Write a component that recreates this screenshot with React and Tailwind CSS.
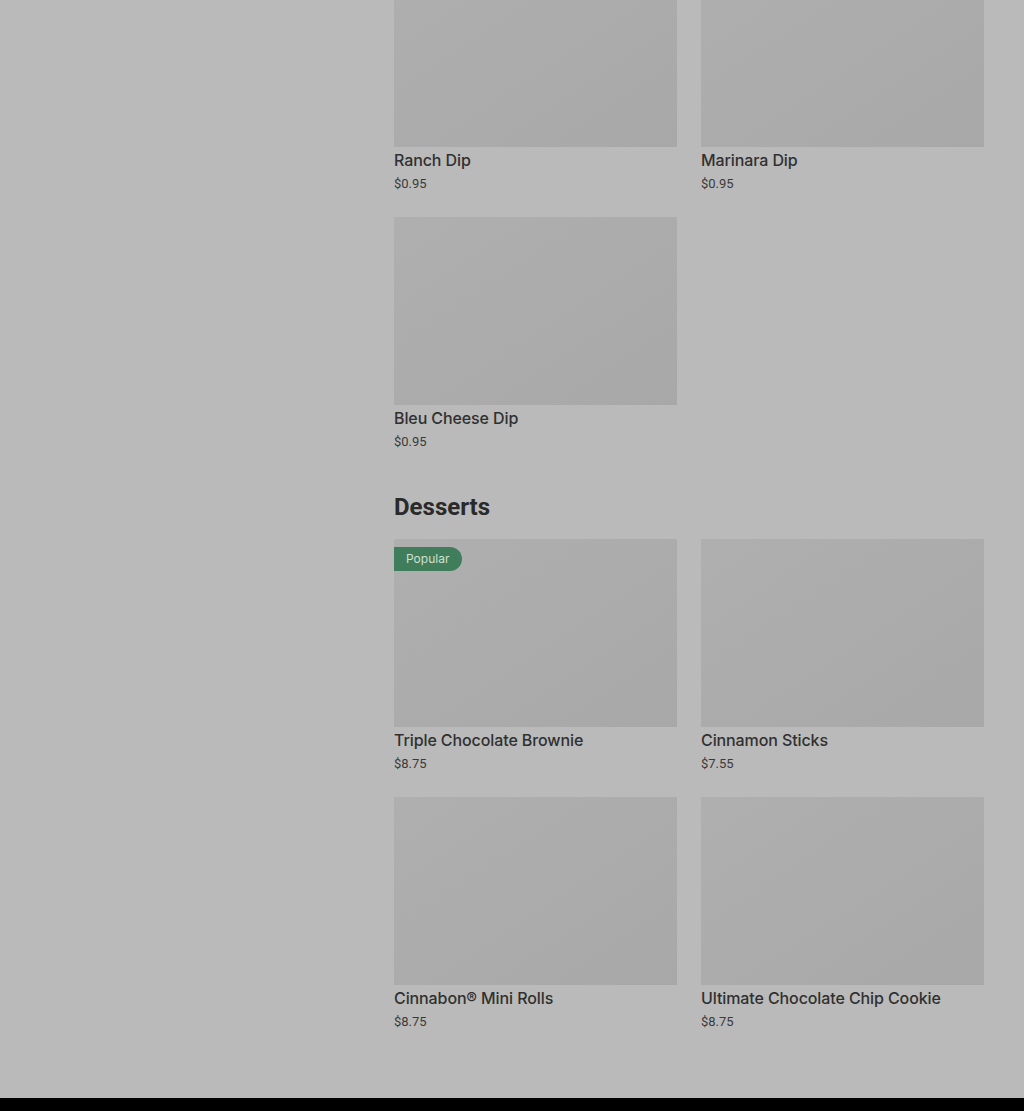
const dips = [
  { name: 'Ranch Dip', price: '$0.95' },
  { name: 'Marinara Dip', price: '$0.95' },
  { name: 'Bleu Cheese Dip', price: '$0.95' },
];

const desserts = [
  { name: 'Triple Chocolate Brownie', price: '$8.75', popular: true },
  { name: 'Cinnamon Sticks', price: '$7.55' },
  { name: 'Cinnabon® Mini Rolls', price: '$8.75' },
  { name: 'Ultimate Chocolate Chip Cookie', price: '$8.75' },
];

const MenuCard = ({ item }) => (
  <div className="flex flex-col">
    <div className="relative h-[188px] bg-gradient-to-br from-[#afafaf] to-[#a8a8a8]">
      {item.popular && (
        <span className="absolute left-0 top-2 h-6 pl-3 pr-[13px] flex items-center rounded-r-full bg-[#3f7d5b] text-[12px] text-[#cfe0d4] font-['Inter',sans-serif]">
          Popular
        </span>
      )}
    </div>
    <h3 className="mt-[3px] text-[16px] leading-5 font-medium tracking-[-0.1px] text-[#303030] font-['Inter',sans-serif]">{item.name}</h3>
    <p className="mt-[5px] text-[13px] leading-[18px] text-[#3a3a3a]">{item.price}</p>
  </div>
);

const App = () => {
  return (
    <div className="min-h-screen bg-[#bababa] font-['Roboto',sans-serif]">
      <div className="flex">
        <aside className="w-[394px] shrink-0"></aside>
        <main className="w-[590px] mt-[-41px] pb-[67px]">
          <section className="grid grid-cols-2 gap-x-6 gap-y-6">
            {dips.map((item) => (
              <MenuCard key={item.name} item={item} />
            ))}
          </section>

          <section className="mt-[40px]">
            <h2 className="text-[24px] leading-8 font-bold text-[#2a2a2a] mb-4">Desserts</h2>
            <div className="grid grid-cols-2 gap-x-6 gap-y-6">
              {desserts.map((item) => (
                <MenuCard key={item.name} item={item} />
              ))}
            </div>
          </section>
        </main>
      </div>
      <footer className="h-[200px] bg-black"></footer>
    </div>
  );
};

export default App;
